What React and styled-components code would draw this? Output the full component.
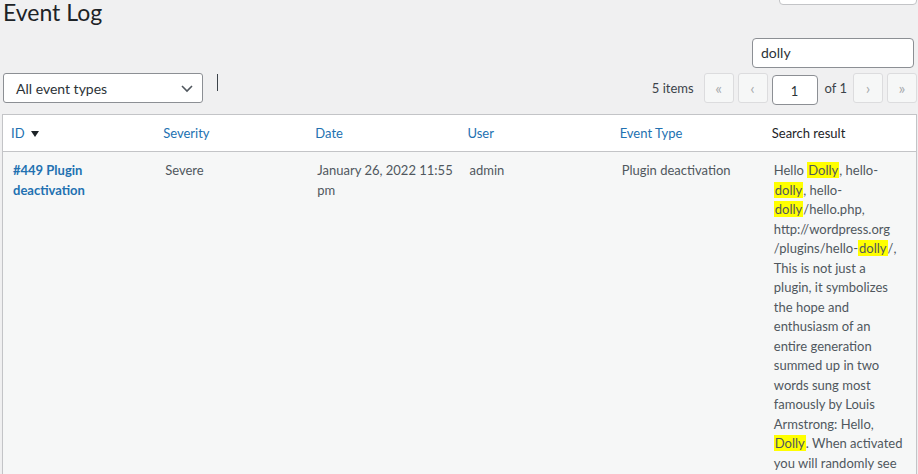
import React from "react";
import styled, { createGlobalStyle } from "styled-components";

const GlobalStyle = createGlobalStyle`
  html, body {
    margin: 0;
    padding: 0;
    background: #f0f0f1;
    overflow: hidden;
  }
  body {
    font-family: Lato, "Open Sans", sans-serif;
    font-size: 13px;
    color: #3c434a;
  }
`;

const Wrap = styled.div`
  padding: 0 1px 0 2px;
`;

const Header = styled.div`
  display: flex;
  justify-content: space-between;
  align-items: flex-start;
`;

const Title = styled.h1`
  margin: 0 0 0 1px;
  font-size: 23px;
  font-weight: 400;
  line-height: 24px;
  color: #1d2327;
`;

const ScreenTab = styled.div`
  width: 136px;
  height: 29px;
  margin-top: -26px;
  background: #fff;
  border: 1px solid #c3c4c7;
  border-radius: 0 0 4px 4px;
`;

const SearchRow = styled.div`
  display: flex;
  justify-content: flex-end;
  margin-top: 14px;
  padding-right: 3px;
`;

const SearchInput = styled.div`
  box-sizing: border-box;
  width: 162px;
  height: 30px;
  padding: 0 8px;
  background: #fff;
  border: 1px solid #8c8f94;
  border-radius: 4px;
  font-size: 14px;
  line-height: 28px;
  color: #2c3338;
`;

const TableNav = styled.div`
  display: flex;
  justify-content: space-between;
  align-items: flex-start;
  margin-top: 5px;
  height: 32px;
`;

const Actions = styled.div`
  display: flex;
  align-items: flex-start;
  padding-left: 1px;
`;

const Select = styled.div`
  box-sizing: border-box;
  display: flex;
  align-items: center;
  justify-content: space-between;
  width: 200px;
  height: 30px;
  padding: 0 5px 0 12px;
  background: #fff;
  border: 1px solid #8c8f94;
  border-radius: 3px;
  font-size: 14px;
  color: #2c3338;
`;

const Caret = styled.span`
  width: 1px;
  height: 17px;
  margin: 1px 0 0 14px;
  background: #3c434a;
`;

const Pages = styled.div`
  display: flex;
  align-items: flex-start;
`;

const Count = styled.span`
  font-size: 13px;
  line-height: 30px;
  color: #3c434a;
  margin-right: 10px;
`;

const PageButton = styled.span`
  box-sizing: border-box;
  display: flex;
  align-items: center;
  justify-content: center;
  width: 30px;
  height: 30px;
  margin-left: ${(p) => (p.$first ? "0" : "4px")};
  background: #f6f7f7;
  border: 1px solid #dcdcde;
  border-radius: 3px;
  color: #a7aaad;
  font-size: 16px;
  line-height: 1;
`;

const PageInput = styled.span`
  box-sizing: border-box;
  width: 46px;
  height: 30px;
  margin: 2px 0 0 4px;
  padding-top: 2px;
  background: #fff;
  border: 1px solid #8c8f94;
  border-radius: 4px;
  text-align: center;
  font-size: 13px;
  line-height: 26px;
  color: #2c3338;
`;

const OfText = styled.span`
  margin: 0 6px 0 7px;
  font-size: 13px;
  line-height: 30px;
  color: #3c434a;
`;

const Table = styled.table`
  width: 100%;
  margin-top: 9px;
  table-layout: fixed;
  border-collapse: separate;
  border-spacing: 0;
  background: #fff;
  border: 1px solid #c3c4c7;
  box-shadow: 0 1px 1px rgba(0, 0, 0, 0.04);
`;

const Th = styled.th`
  padding: 8px;
  text-align: left;
  font-weight: 400;
  font-size: 13px;
  line-height: 20px;
  color: ${(p) => (p.$plain ? "#1d2327" : "#2271b1")};
  border-bottom: 1px solid #c3c4c7;
`;

const SortArrow = styled.span`
  display: inline-block;
  margin: 0 0 1px 6px;
  border-left: 4px solid transparent;
  border-right: 4px solid transparent;
  border-top: 6px solid #1d2327;
  vertical-align: middle;
`;

const Tr = styled.tr`
  background: #f6f7f7;
`;

const Td = styled.td`
  padding: 9px ${(p) => (p.$wide ? "4px" : "10px")} 8px 10px;
  vertical-align: top;
  font-size: 13px;
  line-height: 1.5;
  color: #50575e;
  overflow-wrap: anywhere;
`;

const RowTitle = styled.a`
  color: #2271b1;
  font-weight: 700;
  text-decoration: none;
`;

const Hit = styled.mark`
  background: #ffff00;
  color: inherit;
  padding: 0 1px;
`;

function Chevron() {
  return (
    <svg width="20" height="20" viewBox="0 0 20 20">
      <path d="M5 8 L10 13 L15 8" fill="none" stroke="#50575e" strokeWidth="1.6" />
    </svg>
  );
}

const columns = ["Severity", "Date", "User", "Event Type"];

export default function App() {
  return (
    <Wrap>
      <GlobalStyle />
      <Header>
        <Title>Event Log</Title>
        <ScreenTab />
      </Header>
      <SearchRow>
        <SearchInput>dolly</SearchInput>
      </SearchRow>
      <TableNav>
        <Actions>
          <Select>
            All event types
            <Chevron />
          </Select>
          <Caret />
        </Actions>
        <Pages>
          <Count>5 items</Count>
          <PageButton $first>«</PageButton>
          <PageButton>‹</PageButton>
          <PageInput>1</PageInput>
          <OfText>of 1</OfText>
          <PageButton $first>›</PageButton>
          <PageButton>»</PageButton>
        </Pages>
      </TableNav>
      <Table>
        <thead>
          <tr>
            <Th>
              ID
              <SortArrow />
            </Th>
            {columns.map((c) => (
              <Th key={c}>{c}</Th>
            ))}
            <Th $plain>Search result</Th>
          </tr>
        </thead>
        <tbody>
          <Tr>
            <Td>
              <RowTitle href="#">#449 Plugin deactivation</RowTitle>
            </Td>
            <Td>Severe</Td>
            <Td $wide>January 26, 2022 11:55 pm</Td>
            <Td>admin</Td>
            <Td>Plugin deactivation</Td>
            <Td>
              Hello <Hit>Dolly</Hit>, hello-<Hit>dolly</Hit>, hello-<Hit>dolly</Hit>/hello.php,
              http://wordpress.org<wbr />/plugins/hello-<Hit>dolly</Hit>/, This is not just a plugin,
              it symbolizes the hope and enthusiasm of an entire generation summed up in two words
              sung most famously by Louis Armstrong: Hello, <Hit>Dolly</Hit>. When activated you will
              randomly see a lyric from Hello, <Hit>Dolly</Hit> in the upper right of your admin
              screen on every page.
            </Td>
          </Tr>
        </tbody>
      </Table>
    </Wrap>
  );
}
